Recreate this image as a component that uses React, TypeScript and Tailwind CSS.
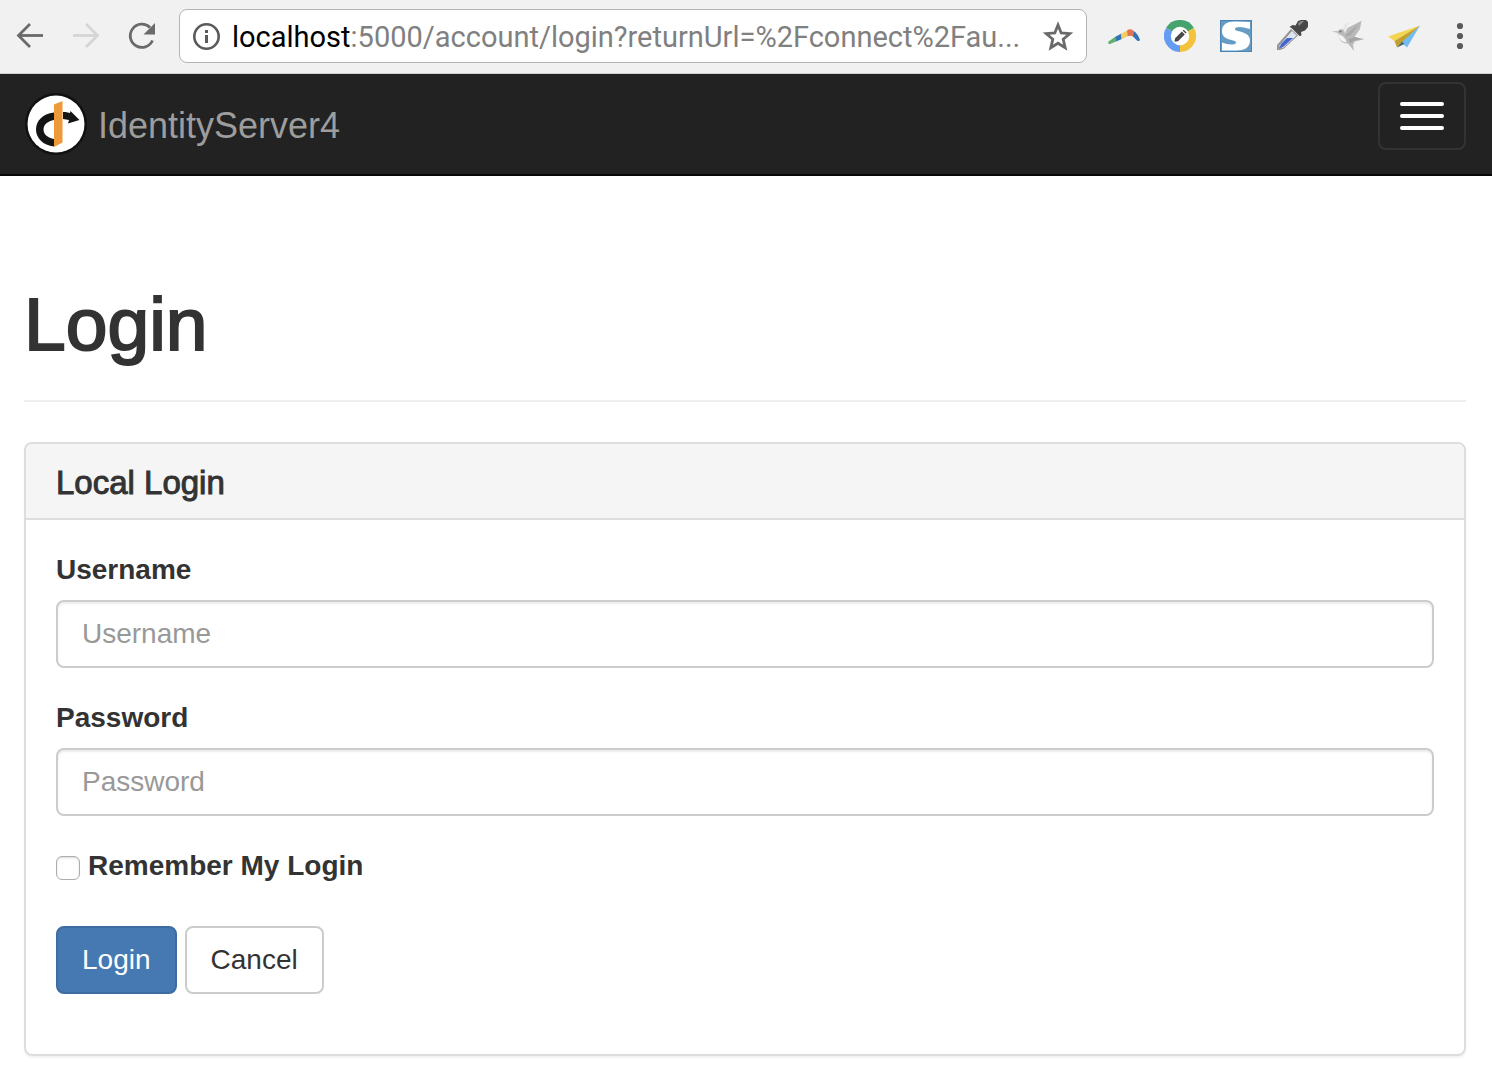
import { useState } from "react";
import type { ReactNode } from "react";

interface IconButtonProps {
  label: string;
  children: ReactNode;
  disabled?: boolean;
}

function IconButton({ label, children, disabled }: IconButtonProps) {
  return (
    <button type="button" aria-label={label} disabled={disabled} className="h-8 w-8 shrink-0">
      {children}
    </button>
  );
}

function BackIcon() {
  return (
    <svg viewBox="0 0 32 32" className="h-8 w-8" fill="none" stroke="#6a6a6a" strokeWidth={2.8} aria-hidden>
      <path d="M4 15.5h25" />
      <path d="M16 4 4.5 15.5 16 27" />
    </svg>
  );
}

function ForwardIcon() {
  return (
    <svg viewBox="0 0 32 32" className="h-8 w-8" fill="none" stroke="#d5d5d5" strokeWidth={2.8} aria-hidden>
      <path d="M3 15.5h25" />
      <path d="M16 4l11.5 11.5L16 27" />
    </svg>
  );
}

function ReloadIcon() {
  return (
    <svg viewBox="0 0 32 32" className="h-8 w-8" aria-hidden>
      <path d="M26.5 20.5A11.6 11.6 0 1 1 24 7.500" fill="none" stroke="#6a6a6a" strokeWidth={2.8} />
      <path d="M29 3v11.5H17.5Z" fill="#6a6a6a" />
    </svg>
  );
}

function InfoIcon() {
  return (
    <svg viewBox="0 0 28 28" className="h-7 w-7 shrink-0" aria-hidden>
      <circle cx="14.5" cy="14.5" r="12.2" fill="none" stroke="#5a5a5a" strokeWidth={2.6} />
      <path d="M13 8h3v3h-3zM13 13h3v8h-3z" fill="#5a5a5a" />
    </svg>
  );
}

function StarIcon() {
  return (
    <svg viewBox="0 0 32 32" className="h-8 w-8" aria-hidden>
      <path
        d="m16 5 3.2 8 8.6.7-6.600 5.600 2 8.400-7.200-4.500-7.200 4.500 2-8.400-6.600-5.600 8.600-.7Z"
        fill="none"
        stroke="#6a6a6a"
        strokeWidth={2.8}
      />
    </svg>
  );
}

function BoomerangIcon() {
  return (
    <svg viewBox="0 0 32 32" className="h-8 w-8" aria-hidden>
      <path d="M.5 21.5 7 17l1 4.500L2 24q-2.500.5-1.500-2.500Z" fill="#5fb06c" />
      <path d="m7 17 6-3.200.8 5.200L8 21.500Z" fill="#2f74b5" />
      <path d="m13 13.800 6-3.300.5 5.700-5.700 2.800Z" fill="#f6cd63" />
      <path d="M19 10.500q3-2.500 6.500.3L25 16.500q-2.500-1.500-5.500-.3Z" fill="#e17455" />
      <path d="M25.500 10.800Q30 14 32 20q-1 1.800-3 .5l-4-4Z" fill="#2f74b5" />
    </svg>
  );
}

function PencilRingIcon() {
  return (
    <svg viewBox="0 0 32 32" className="h-8 w-8" aria-hidden>
      <path d="M16 16 2.100 8A16 16 0 0 1 29.900 8Z" fill="#47a36d" />
      <path d="M16 16 29.900 8A16 16 0 0 1 16 32Z" fill="#f3c33e" />
      <path d="M16 16V32A16 16 0 0 1 2.100 8Z" fill="#639cf2" />
      <circle cx="16" cy="16" r="9.2" fill="#fff" />
      <path d="m10.500 21.800.6-3.500 6.800-6.800 2.900 2.900-6.800 6.800ZM18.700 10.700l1-1 2.900 2.900-1 1Z" fill="#484848" />
    </svg>
  );
}

function SnapIcon() {
  return (
    <svg viewBox="0 0 32 32" className="h-8 w-8" aria-hidden>
      <path d="M0 0h32v32H0z" fill="#4b83b2" />
      <path d="M1 1h30v30H1z" fill="#659cc6" />
      <path
        d="M30 2v7q-5-1.500-10-2-5.500 0-5 2.300c.3 1.600 3 1.700 6.500 2.700 4.500 1.300 8.500 3.500 8.500 8.500 0 7-5.500 10-14 10H2v-8q5 2 9 2 5 0 5-2c0-1.700-3-2-6.500-3C5 18.200 2 16 2 11c0-6.500 5-9.500 13-9.500 5 0 10 .2 15 .5Z"
        fill="#fff"
      />
    </svg>
  );
}

function EyedropperIcon() {
  return (
    <svg viewBox="0 0 32 32" className="h-8 w-8" aria-hidden>
      <path d="M1 30v-5L15 9l7 6.500L8 28.500 4 30Z" fill="#969696" />
      <path d="M3 26 16 11l4.500 4.500L7 28Z" fill="#dfe5f2" />
      <path d="m3.500 28 1.500-4 6-6h6L7 27Z" fill="#4265d0" />
      <path d="m13.500 7 3-2 3 .5L22 1l3-1h5l2 2v5l-3 3.500-4 1.500.5 3.500-2 .5-8-8Z" fill="#484848" />
      <path d="m22 3.500 3-2.500h3l-5 5Z" fill="#8a8a8a" />
    </svg>
  );
}

function BirdIcon() {
  return (
    <svg viewBox="0 0 32 32" className="h-8 w-8" aria-hidden>
      <path d="m10 12 3-8 5-2-4 5-2 7Z" fill="#e4e4e4" />
      <path
        d="m12.500 14 3-6L29.500.8 28 9l-5.500 8 10 2-9.500 2.500-2 3 1 6.500-6-7.500Q8.500 23.500 7 17.500L6 13l-6-1.500 6-.5q2-3 5-1.500 2 1.500 1.500 4.500Z"
        fill="#bababa"
      />
      <path d="M6.500 14q.5 8 8 8.500-1-6-8-8.500Z" fill="#f3f3f3" />
      <path d="M13.500 15 28 3l-9 12-5 2Z" fill="#a9a9a9" />
      <path d="m16 19 7-2 7 2-8 1.500-4 3Z" fill="#a4a4a4" />
      <circle cx="8.5" cy="11.5" r="1.1" fill="#707070" />
    </svg>
  );
}

function PaperPlaneIcon() {
  return (
    <svg viewBox="0 0 32 32" className="h-8 w-8" aria-hidden>
      <path d="M0 16.500 32 5.500 6.500 21Z" fill="#f4d54f" />
      <path d="M32 5.500 13 22l6 5.500Z" fill="#72bdf0" />
      <path d="M32 5.500 6.500 21 9 27.500l4.500-5Z" fill="#c5a02f" />
      <path d="m9 27.500 5-6 2.500 2.500Z" fill="#4b6770" />
    </svg>
  );
}

function Logo() {
  return (
    <svg viewBox="0 0 64 64" className="h-16 w-16 shrink-0" aria-hidden>
      <circle cx="32" cy="32" r="31" fill="#111" />
      <circle cx="32" cy="32" r="28.5" fill="#fff" />
      <path d="M30 20.500C18 22 12 29 12 37.500 12 46 19 53.500 30 54.500V47c-6-1-10.500-4.500-10.500-9.500S24 29 30 28Z" fill="#151515" />
      <path d="M39 20h2.500l4.500 1 .5-2L55.500 28 44 31.500l1-3.500-6-1Z" fill="#151515" />
      <path d="m30 12.500 8.500-3.500v41.500L30 55Z" fill="#ee9a3a" />
    </svg>
  );
}

function BrowserBar() {
  return (
    <header className="flex h-[74px] items-center border-b border-[#d0d0d0] bg-[#f1f1f1] pr-4 pb-px pl-3.5">
      <div className="flex gap-6">
        <IconButton label="Back">
          <BackIcon />
        </IconButton>
        <IconButton label="Forward" disabled>
          <ForwardIcon />
        </IconButton>
        <IconButton label="Reload">
          <ReloadIcon />
        </IconButton>
      </div>
      <div className="ml-[21px] flex h-[54px] min-w-0 flex-1 items-center rounded-lg border border-[#b4b4b4] bg-white px-3">
        <InfoIcon />
        <p className="ml-3 min-w-0 flex-1 truncate pt-0.5 font-['Roboto',sans-serif] text-[29px] leading-9 text-[#808080]">
          <span className="text-black">localhost</span>:5000/account/login?returnUrl=%2Fconnect%2Fau...
        </p>
        <IconButton label="Bookmark this page">
          <StarIcon />
        </IconButton>
      </div>
      <div className="ml-[21px] flex gap-6">
        <IconButton label="Boomerang">
          <BoomerangIcon />
        </IconButton>
        <IconButton label="Edit">
          <PencilRingIcon />
        </IconButton>
        <IconButton label="Snap">
          <SnapIcon />
        </IconButton>
        <IconButton label="Color picker">
          <EyedropperIcon />
        </IconButton>
        <IconButton label="Bird">
          <BirdIcon />
        </IconButton>
        <IconButton label="Send">
          <PaperPlaneIcon />
        </IconButton>
        <IconButton label="Browser menu">
          <svg viewBox="0 0 32 32" className="h-8 w-8" fill="#5a5a5a" aria-hidden>
            <circle cx="16" cy="6" r="3.1" />
            <circle cx="16" cy="16" r="3.1" />
            <circle cx="16" cy="26" r="3.1" />
          </svg>
        </IconButton>
      </div>
    </header>
  );
}

function Navbar() {
  return (
    <nav className="flex h-[102px] items-start justify-between border-b-2 border-[#080808] bg-[#222] pt-2 pr-[26px] pl-6">
      <a href="#" className="flex items-center gap-2.5 pt-2.5 text-4xl text-[#9d9d9d]">
        <Logo />
        <span className="pt-1">IdentityServer4</span>
      </a>
      <button
        type="button"
        aria-label="Toggle navigation"
        className="flex h-[68px] w-[88px] flex-col items-center gap-2 rounded-lg border-2 border-[#333] pt-[18px]"
      >
        <span className="h-1 w-11 rounded-xs bg-white" />
        <span className="h-1 w-11 rounded-xs bg-white" />
        <span className="h-1 w-11 rounded-xs bg-white" />
      </button>
    </nav>
  );
}

interface FieldProps {
  id: string;
  label: string;
  type: string;
  value: string;
  onChange: (value: string) => void;
}

function Field({ id, label, type, value, onChange }: FieldProps) {
  return (
    <div className="mb-[30px]">
      <label htmlFor={id} className="mb-2.5 block font-bold">
        {label}
      </label>
      <input
        id={id}
        type={type}
        placeholder={label}
        value={value}
        onChange={(e) => onChange(e.target.value)}
        className="block h-[68px] w-full rounded-lg border-2 border-[#ccc] bg-white px-6 shadow-[inset_0_2px_2px_rgba(0,0,0,0.075)] placeholder:text-[#999]"
      />
    </div>
  );
}

export default function App() {
  const [username, setUsername] = useState("");
  const [password, setPassword] = useState("");
  const [remember, setRemember] = useState(false);

  return (
    <div className="bg-white font-['Liberation_Sans',Arial,sans-serif] text-[28px] leading-10 text-[#333]">
      <BrowserBar />
      <Navbar />
      <main className="pt-[108px] pr-[26px] pb-6 pl-6">
        <h1 className="border-b-2 border-[#eee] pb-9 text-[75px] leading-20 [-webkit-text-stroke:2px_#333]">Login</h1>
        <section className="mt-10 rounded-lg border-2 border-[#ddd] shadow-[0_2px_2px_rgba(0,0,0,0.05)]">
          <div className="rounded-t-md border-b-2 border-[#ddd] bg-[#f5f5f5] px-[30px] pt-[22px] pb-[18px]">
            <h3 className="text-[33px] leading-[34px] [-webkit-text-stroke:1px_#333]">Local Login</h3>
          </div>
          <form className="px-[30px] pt-[30px] pb-[60px]" onSubmit={(e) => e.preventDefault()}>
            <Field id="username" label="Username" type="text" value={username} onChange={setUsername} />
            <Field id="password" label="Password" type="password" value={password} onChange={setPassword} />
            <label className="mb-10 flex items-center gap-2 font-bold">
              <input
                type="checkbox"
                checked={remember}
                onChange={(e) => setRemember(e.target.checked)}
                className="mt-1 h-6 w-6 appearance-none rounded-md border border-[#adadad] bg-white shadow-[inset_0_1px_2px_rgba(0,0,0,0.15)] checked:bg-[#337ab7]"
              />
              Remember My Login
            </label>
            <div className="flex gap-2">
              <button type="submit" className="h-[68px] rounded-lg border-2 border-[#3d6ba2] bg-[#4679b2] px-6 text-white">
                Login
              </button>
              <button type="button" className="h-[68px] rounded-lg border-2 border-[#ccc] bg-white px-6">
                Cancel
              </button>
            </div>
          </form>
        </section>
      </main>
    </div>
  );
}
